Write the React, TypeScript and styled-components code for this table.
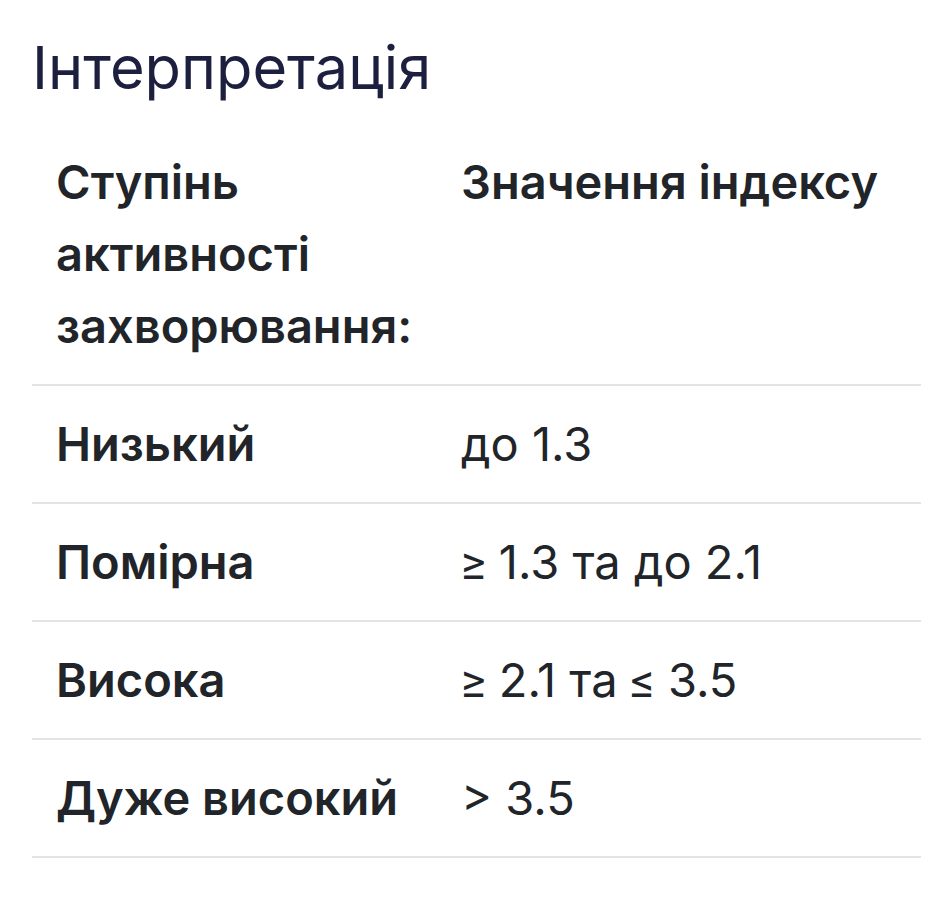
import React from 'react';
import styled, { createGlobalStyle } from 'styled-components';

const GlobalStyle = createGlobalStyle`
  html, body {
    margin: 0;
    padding: 0;
    background: #ffffff;
  }
  body {
    font-family: Inter, "Noto Sans", sans-serif;
  }
`;

const Page = styled.div`
  padding: 32px 22px 40px 32px;
`;

const Title = styled.h2`
  margin: 0 0 22px 0;
  font-size: 59.5px;
  line-height: 70px;
  font-weight: 400;
  color: #1c1f3e;
`;

const Table = styled.table`
  width: 889px;
  border-collapse: collapse;
  color: #212529;
`;

const Row = styled.tr`
  border-bottom: 2px solid #e2e3e5;
`;

const Cell = styled.td<{ $bold?: boolean; $width?: string }>`
  padding: 22px 24px;
  font-size: 47px;
  line-height: 72px;
  vertical-align: top;
  text-align: left;
  font-weight: ${p => (p.$bold ? 600 : 400)};
  width: ${p => p.$width || 'auto'};
`;

const HeadCell = styled(Cell).attrs({ as: 'th' })``;

// the comparison signs in the reference are narrower than Inter's
const Sign = styled.span`
  font-family: Roboto, "Liberation Sans", sans-serif;
  line-height: 1;
`;

const renderValue = (v: string) =>
  v.split(/([≥≤])/).map((part, i) =>
    part === '≥' || part === '≤' ? <Sign key={i}>{part}</Sign> : part
  );

const rows = [
  { level: 'Низький', value: 'до 1.3' },
  { level: 'Помірна', value: '≥ 1.3 та до 2.1' },
  { level: 'Висока', value: '≥ 2.1 та ≤ 3.5' },
  { level: 'Дуже високий', value: '> 3.5' },
];

export default function App() {
  return (
    <>
      <GlobalStyle />
      <Page>
        <Title>Інтерпретація</Title>
        <Table>
          <thead>
            <Row>
              <HeadCell $bold $width="357px">
                Ступінь активності захворювання:
              </HeadCell>
              <HeadCell $bold>Значення індексу</HeadCell>
            </Row>
          </thead>
          <tbody>
            {rows.map(r => (
              <Row key={r.level}>
                <Cell $bold>{r.level}</Cell>
                <Cell>{renderValue(r.value)}</Cell>
              </Row>
            ))}
          </tbody>
        </Table>
      </Page>
    </>
  );
}
